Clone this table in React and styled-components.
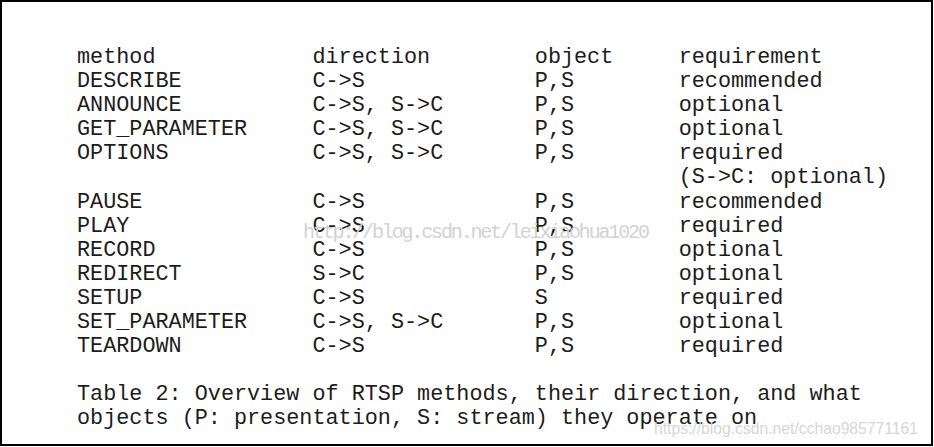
import React from "react";
import styled, { createGlobalStyle } from "styled-components";

const GlobalStyle = createGlobalStyle`
  html, body {
    margin: 0;
    padding: 0;
    background: #fff;
  }
`;

const rows = [
  ["DESCRIBE", "C->S", "P,S", ["recommended"]],
  ["ANNOUNCE", "C->S, S->C", "P,S", ["optional"]],
  ["GET_PARAMETER", "C->S, S->C", "P,S", ["optional"]],
  ["OPTIONS", "C->S, S->C", "P,S", ["required", "(S->C: optional)"]],
  ["PAUSE", "C->S", "P,S", ["recommended"]],
  ["PLAY", "C->S", "P,S", ["required"]],
  ["RECORD", "C->S", "P,S", ["optional"]],
  ["REDIRECT", "S->C", "P,S", ["optional"]],
  ["SETUP", "C->S", "S", ["required"]],
  ["SET_PARAMETER", "C->S, S->C", "P,S", ["optional"]],
  ["TEARDOWN", "C->S", "P,S", ["required"]],
];

const App = () => {
  return (
    <>
      <GlobalStyle />
      <Frame>
        <Table>
          <Row>
            <Cell>method</Cell>
            <Cell>direction</Cell>
            <Cell>object</Cell>
            <Cell>requirement</Cell>
          </Row>
          {rows.map(([method, direction, object, req]) => (
            <Row key={method}>
              <Cell>{method}</Cell>
              <Cell>{direction}</Cell>
              <Cell>{object}</Cell>
              <Cell>
                {req.map((line) => (
                  <Line key={line}>{line}</Line>
                ))}
              </Cell>
            </Row>
          ))}
        </Table>
        <Caption>
          <Line>Table 2: Overview of RTSP methods, their direction, and what</Line>
          <Line>objects (P: presentation, S: stream) they operate on</Line>
        </Caption>
        <CenterMark>http://blog.csdn.net/leixiaohua1020</CenterMark>
        <CornerMark>https://blog.csdn.net/cchao985771161</CornerMark>
      </Frame>
    </>
  );
};

const Frame = styled.div`
  position: relative;
  box-sizing: border-box;
  width: 933px;
  height: 446px;
  border: 2px solid #000;
  background: #fff;
  padding: 44px 0 0 75px;
  color: #1c1c1c;
  font-family: "Liberation Mono", "Courier New", monospace;
  font-size: 21.8px;
  line-height: 24.1px;
  overflow: hidden;
`;

const Table = styled.div`
  display: flex;
  flex-direction: column;
`;

const Row = styled.div`
  display: grid;
  grid-template-columns: 18ch 17ch 11ch auto;
  white-space: pre;
`;

const Cell = styled.div`
  display: flex;
  flex-direction: column;
`;

const Line = styled.div`
  white-space: pre;
`;

const Caption = styled.div`
  margin-top: 24.1px;
  display: flex;
  flex-direction: column;
`;

const CenterMark = styled.div`
  position: absolute;
  left: 301px;
  top: 221px;
  font-family: "Liberation Mono", "Courier New", monospace;
  font-size: 20px;
  line-height: 20px;
  letter-spacing: -2.15px;
  color: #d2d2d2;
  white-space: nowrap;
  pointer-events: none;
`;

const CornerMark = styled.div`
  position: absolute;
  left: 652px;
  top: 419px;
  font-family: "Liberation Sans", Arial, sans-serif;
  font-size: 15.7px;
  line-height: 15.7px;
  color: #d6d6d6;
  white-space: nowrap;
  pointer-events: none;
`;

export default App;
